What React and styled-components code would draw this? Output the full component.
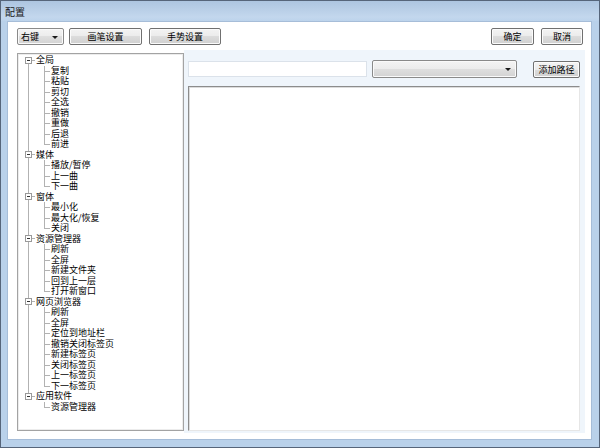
import React from 'react';
import styled, { createGlobalStyle } from 'styled-components';

const GlobalStyle = createGlobalStyle`
  html, body { margin: 0; padding: 0; background: #ffffff; }
  * { box-sizing: border-box; }
  body { font-family: "Noto Sans CJK SC", "Noto Sans", sans-serif; font-size: 9px; color: #000; }
`;

const tree = [
  { name: '全局', items: ['复制', '粘贴', '剪切', '全选', '撤销', '重做', '后退', '前进'] },
  { name: '媒体', items: ['播放/暂停', '上一曲', '下一曲'] },
  { name: '窗体', items: ['最小化', '最大化/恢复', '关闭'] },
  { name: '资源管理器', items: ['刷新', '全屏', '新建文件夹', '回到上一层', '打开新窗口'] },
  { name: '网页浏览器', items: ['刷新', '全屏', '定位到地址栏', '撤销关闭标签页', '新建标签页', '关闭标签页', '上一标签页', '下一标签页'] },
  { name: '应用软件', items: ['资源管理器'] },
];

const Window = styled.div`
  width: 600px;
  height: 448px;
  border: 1px solid #56657a;
  background: #b9d1ea;
  display: flex;
  flex-direction: column;
  padding: 0 7px 7px 6px;
`;

const TitleBar = styled.div`
  height: 20px;
  flex: none;
  margin: 0 -7px 0 -6px;
  padding: 0 0 0 4px;
  background: linear-gradient(#adc5e0, #c3d7ed 80%, #bcd3eb);
  display: flex;
  align-items: center;
  font-size: 10px;
  color: #1b1b1b;
`;

const Client = styled.div`
  flex: 1;
  background: #ffffff;
  border: 1px solid #a6bdd8;
  display: flex;
  flex-direction: column;
  min-height: 0;
`;

const TopRow = styled.div`
  display: flex;
  align-items: center;
  height: 17px;
  margin: 6px 8px 0 9px;
  gap: 5px;
`;

const Button = styled.button`
  width: ${p => p.$w}px;
  height: 17px;
  margin-left: ${p => p.$ml || 0}px;
  padding: 0;
  border: 1px solid #707070;
  border-radius: 2px;
  background: linear-gradient(#f3f3f3, #ebebeb 50%, #dcdcdc 50%, #d0d0d0);
  box-shadow: inset 0 0 0 1px #fbfbfb;
  font-family: "Noto Sans CJK SC", sans-serif;
  font-size: 9px;
  line-height: 15px;
  color: #000;
  text-align: center;
`;

const Select = styled.div`
  position: relative;
  width: ${p => p.$w}px;
  height: ${p => p.$h}px;
  margin-left: ${p => p.$ml || 0}px;
  border: 1px solid #8a8a8a;
  border-radius: 2px;
  background: linear-gradient(#f4f4f4, #ececec 50%, #dfdfdf 50%, #d3d3d3);
  box-shadow: inset 0 0 0 1px #fafafa;
  display: flex;
  align-items: center;
  padding-left: 3px;
  font-size: 9px;
  line-height: 1;

  &::after {
    content: '';
    position: absolute;
    right: 5px;
    top: 50%;
    margin-top: -1px;
    border-left: 3px solid transparent;
    border-right: 3px solid transparent;
    border-top: 3px solid #1a1a1a;
  }
`;

const Spacer = styled.div`
  flex: 1;
`;

const Lower = styled.div`
  flex: 1;
  display: flex;
  margin: 5px 6px 6px 9px;
  min-height: 0;
`;

const TreeBox = styled.div`
  width: 167px;
  height: 378px;
  margin-top: 3px;
  border: 1px solid #a3a3a3;
  box-shadow: inset 0 0 0 1px #ececec;
  background: #fff;
  padding: 1px 0 0 7px;
  overflow: hidden;
`;

const RootList = styled.ul`
  list-style: none;
  margin: 0;
  padding: 0;
`;

const RootNode = styled.li`
  position: relative;

  &:not(:last-child)::before {
    content: '';
    position: absolute;
    left: 3px;
    top: 5px;
    bottom: -5px;
    border-left: 1px solid #b2b2b2;
  }
`;

const RootRow = styled.div`
  position: relative;
  display: flex;
  align-items: center;
  height: 10.5px;
  line-height: 10.5px;
  white-space: nowrap;
`;

const Expander = styled.span`
  position: relative;
  z-index: 1;
  width: 7px;
  height: 7px;
  flex: none;
  border: 1px solid #9a9a9a;
  background: #fff;

  &::after {
    content: '';
    position: absolute;
    left: 1px;
    right: 1px;
    top: 2px;
    border-top: 1px solid #333;
  }
`;

const Dash = styled.span`
  width: 3px;
  flex: none;
  border-top: 1px solid #b2b2b2;
`;

const Label = styled.span`
  padding-left: 1px;
`;

const ChildList = styled.ul`
  list-style: none;
  margin: 0;
  padding: 0;
`;

const ChildNode = styled.li`
  position: relative;
  height: 10.5px;
  line-height: 10.5px;
  padding-left: 26px;
  white-space: nowrap;

  &::before {
    content: '';
    position: absolute;
    left: 19px;
    top: 0;
    bottom: 0;
    border-left: 1px solid #b2b2b2;
  }

  &:last-child::before {
    bottom: 5px;
  }

  &::after {
    content: '';
    position: absolute;
    left: 19px;
    width: 6px;
    top: 5px;
    border-top: 1px solid #b2b2b2;
  }
`;

const Panel = styled.div`
  flex: 1;
  background: #eff5fb;
  display: flex;
  flex-direction: column;
  padding: 10px 5px 2px 4px;
  min-width: 0;
`;

const PanelBar = styled.div`
  display: flex;
  align-items: center;
  height: 18px;
`;

const TextInput = styled.div`
  width: 179px;
  height: 16px;
  background: #fff;
  border: 1px solid #dbe2ea;
`;

const ListArea = styled.div`
  flex: 1;
  margin-top: 8px;
  background: #fff;
  border-top: 1px solid #8c8c8c;
  border-left: 1px solid #8c8c8c;
  border-right: 1px solid #e6e6e6;
  border-bottom: 1px solid #e6e6e6;
  box-shadow: inset 1px 1px 0 #dcdcdc;
`;

export default function App() {
  return (
    <>
      <GlobalStyle />
      <Window>
        <TitleBar>配置</TitleBar>
        <Client>
          <TopRow>
            <Select $w={47} $h={17}>右键</Select>
            <Button $w={73}>画笔设置</Button>
            <Button $w={72} $ml={2}>手势设置</Button>
            <Spacer />
            <Button $w={43}>确定</Button>
            <Button $w={42} $ml={2}>取消</Button>
          </TopRow>
          <Lower>
            <TreeBox>
              <RootList>
                {tree.map(group => (
                  <RootNode key={group.name}>
                    <RootRow>
                      <Expander />
                      <Dash />
                      <Label>{group.name}</Label>
                    </RootRow>
                    <ChildList>
                      {group.items.map((item, i) => (
                        <ChildNode key={i}>{item}</ChildNode>
                      ))}
                    </ChildList>
                  </RootNode>
                ))}
              </RootList>
            </TreeBox>
            <Panel>
              <PanelBar>
                <TextInput />
                <Select $w={145} $h={18} $ml={5} />
                <Spacer />
                <Button $w={47}>添加路径</Button>
              </PanelBar>
              <ListArea />
            </Panel>
          </Lower>
        </Client>
      </Window>
    </>
  );
}
